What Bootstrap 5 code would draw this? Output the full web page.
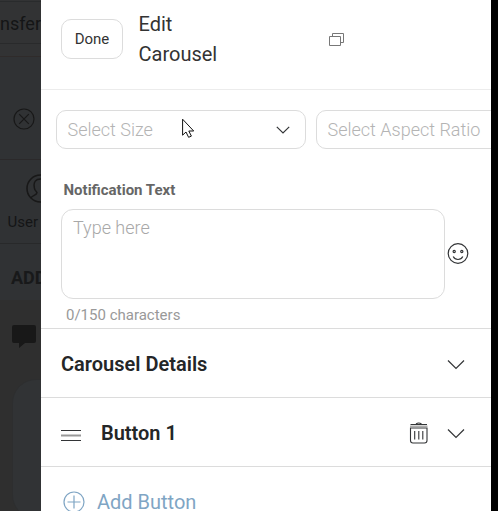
<!DOCTYPE html>
<html lang="en">
<head>
<meta charset="utf-8">
<meta name="viewport" content="width=device-width, initial-scale=1">
<title>Edit Carousel</title>
<link href="https://cdn.jsdelivr.net/npm/bootstrap@5.3.0/dist/css/bootstrap.min.css" rel="stylesheet">
<script src="https://cdn.jsdelivr.net/npm/bootstrap@5.3.0/dist/js/bootstrap.bundle.min.js" defer></script>
<style>
body{font-family:Roboto,sans-serif;width:498px;height:511px;background:#000;color:#242627;line-height:1.2}
svg{display:block;flex:none;fill:none;stroke:#333537;stroke-width:1.2}
.behind{width:41px;background:#303234;color:#141516}
.behind svg{stroke:#181818}
.top-strip{height:57px;border-bottom:1px solid #2f2b2a;background:#323334;font-size:18px}
.top-input{height:43px;margin-top:1px;padding-top:2px;border-top:1px solid #292b2c;border-bottom:1px solid #292a2b}
.close-strip{height:103px;padding:51px 0 0 13px;border-bottom:1px solid #2b292a}
.user-strip{height:84px;padding:14px 0 0 7.5px;border-bottom:1px solid #28292a;font-size:15px}
.user-strip svg{margin:0 0 10px 18.500px}
.add-strip{height:56px;padding:23px 0 0 11px;font-size:18px;color:#18191a;font-weight:700}
.chat-strip{background:#2f2f2f;padding:25px 0 0 12px}
.chat-strip .bubble{fill:#181818;stroke:none}
.chat-card{height:140px;width:80px;margin-top:30px;background:#313335;border:1px solid #2d2e2f;border-radius:24px}
.panel{width:450px}
.head{height:90px;border-bottom:1px solid #ececec;padding-left:20px}
.done{width:62px;height:40px;margin-top:19px;border:1px solid #dcdcdc;border-radius:10px;font-size:15px;color:#333;padding:1px 0 0;line-height:1}
.heading{width:190px;margin:9px 0 0 15.5px;font-size:20px;line-height:30px;color:#333}
.copies{margin-top:32.5px}
.picks{padding:20px 0 0 15px;gap:10px}
.pick{width:250px;height:39px;border:1px solid #dcdcdc;border-radius:10px;padding:0 14px 0 10.5px;font-size:18px;font-weight:300;color:#b4b4b4}
.lbl{font-size:15px;font-weight:700;color:#666;margin:32px 0 0 22.5px;line-height:18px;height:28px}
.note{width:384px;height:90px;margin-left:20px;border:1px solid #dcdcdc;border-radius:12px;padding:7px 11px;font-size:18px;font-weight:300;resize:none;display:block;outline:0}
.note::placeholder{color:#a8a8a8}
.smile{margin-left:2px}
.count{height:30px;padding:7px 0 0 25px;font-size:15px;color:#999;line-height:18px;border-bottom:1px solid #dcdcdc}
.line-row{height:69px;padding:2px 26px 0 20px;border-bottom:1px solid #dcdcdc;font-size:20px;font-weight:600}
.trash{margin-right:18px}
.add-row{height:70px;padding:0 0 0 22px;font-size:20px;color:#7fa5c4}
.add-row svg{stroke:#7fa5c4}
.pointer{left:182px;top:118px}
</style>
</head>
<body class="d-flex overflow-hidden position-relative m-0">
<aside class="behind d-flex flex-column flex-shrink-0 overflow-hidden h-100">
  <div class="top-strip flex-shrink-0"><div class="top-input d-flex align-items-center justify-content-end">Transfer</div></div>
  <div class="close-strip flex-shrink-0"><svg width="22" height="22" viewBox="0 0 22 22"><circle cx="11" cy="11" r="10"/><path d="M6.2 6.2l9.6 9.6M15.8 6.2l-9.6 9.6"/></svg></div>
  <div class="user-strip flex-shrink-0"><svg width="29" height="29" viewBox="0 0 29 29"><circle cx="14.5" cy="14.5" r="13.5" stroke-width="1.6"/><path d="M5 24c1-3 6-2.500 6-5.500-2.500-2.500-3-4-2.700-5.500-1-5 1.500-8 6.200-8s7.500 3 6.200 8c.3 1.500-.2 3-2.700 5.500 0 3 5 2.500 6 5.500" stroke-width="1.500"/></svg>User</div>
  <div class="add-strip flex-shrink-0">ADD</div>
  <div class="chat-strip flex-grow-1">
    <svg width="24" height="24" viewBox="0 0 24 24"><path class="bubble" d="M2 0h20q2 0 2 2v14q0 2-2 2H13l-6 5v-5H2q-2 0-2-2V2q0-2 2-2z"/></svg>
    <div class="chat-card"></div>
  </div>
</aside>
<main class="panel bg-white flex-shrink-0 h-100 overflow-hidden">
  <header class="head d-flex align-items-start">
    <button class="done btn flex-shrink-0" type="button">Done</button>
    <div class="heading">Edit<br>Carousel</div>
    <svg class="copies" width="15" height="14" viewBox="0 0 15 14"><path d="M.5 3.500h11v9H.5zM3.500 3.500v-3h11v9h-3" stroke="#777" stroke-width="1"/></svg>
  </header>
  <div class="picks d-flex">
    <div class="pick d-flex align-items-center justify-content-between flex-shrink-0"><span>Select Size</span><svg width="16" height="10" viewBox="0 0 16 10"><path d="M1.800 1.800L8 8l6.200-6.200"/></svg></div>
    <div class="pick d-flex align-items-center flex-shrink-0"><span>Select Aspect Ratio</span></div>
  </div>
  <label class="lbl d-block" for="note">Notification Text</label>
  <div class="d-flex align-items-center">
    <textarea class="note" id="note" placeholder="Type here"></textarea>
    <svg class="smile" width="22" height="22" viewBox="0 0 22 22"><circle cx="11" cy="10.500" r="9.800"/><circle cx="7.200" cy="8.500" r="1.100"/><circle cx="14.800" cy="8.500" r="1.100"/><path d="M6.200 13.500c2 4 7.600 4 9.600 0"/></svg>
  </div>
  <div class="count">0/150 characters</div>
  <div class="line-row d-flex align-items-center justify-content-between"><span>Carousel Details</span><svg width="18" height="11" viewBox="0 0 18 11"><path d="M1 1.500l8 8 8-8"/></svg></div>
  <div class="line-row d-flex align-items-center">
    <svg width="20" height="11" viewBox="0 0 20 11" class="mt-1"><path d="M0 .5h20M0 10.500h20" stroke-width="1"/><path d="M0 5.500h20" stroke="#999" stroke-width="2"/></svg>
    <span class="flex-grow-1 ps-3 ms-1">Button 1</span>
    <svg class="trash" width="20" height="22" viewBox="0 0 20 22"><path d="M1.500 6h16.500v12.500q0 2.500-2.500 2.500h-11.500q-2.500 0-2.500-2.500zM1.500 2.500h16.500M7 2q2.700-2 5.500 0M5.700 9v8.500M9.800 9v8.500M13.800 9v8.500" stroke-width="1.100"/><path d="M1 4.200h17.500" stroke="#999"/></svg>
    <svg width="18" height="11" viewBox="0 0 18 11"><path d="M1 1.500l8 8 8-8"/></svg>
  </div>
  <div class="add-row d-flex align-items-center"><svg width="22" height="22" viewBox="0 0 22 22"><circle cx="11" cy="11" r="10"/><path d="M11 4.500v13M4.500 11h13"/></svg><span class="ps-2 ms-1">Add Button</span></div>
</main>
<svg class="pointer position-absolute" width="13" height="20" viewBox="0 0 13 20"><path d="M.6 1.200v16l3.400-3.200 2.600 5.300 2.800-1.200-2.600-5.100h4.900z" fill="#fff" stroke="#111" stroke-width="1"/></svg>
</body>
</html>
